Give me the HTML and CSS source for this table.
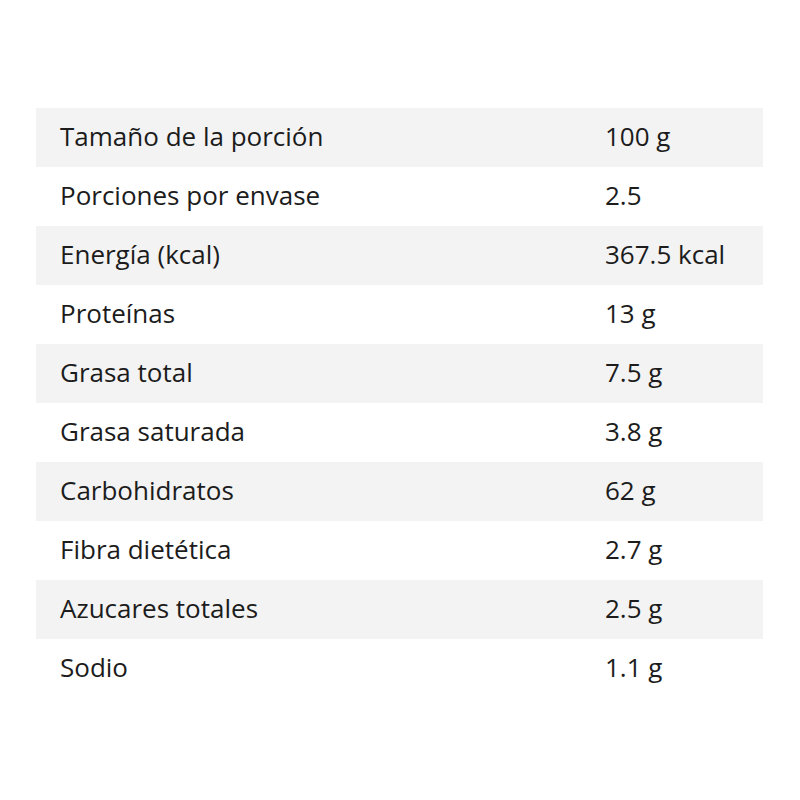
FILE: index.html
```html
<!DOCTYPE html>
<html lang="es">
<head>
<meta charset="utf-8">
<link rel="stylesheet" href="styles.css">
</head>
<body>
<div class="page">
  <div class="nut">
    <div class="row"><span class="k">Tamaño de la porción</span><span class="v">100 g</span></div>
    <div class="row"><span class="k">Porciones por envase</span><span class="v">2.5</span></div>
    <div class="row"><span class="k">Energía (kcal)</span><span class="v">367.5 kcal</span></div>
    <div class="row"><span class="k">Proteínas</span><span class="v">13 g</span></div>
    <div class="row"><span class="k">Grasa total</span><span class="v">7.5 g</span></div>
    <div class="row"><span class="k">Grasa saturada</span><span class="v">3.8 g</span></div>
    <div class="row"><span class="k">Carbohidratos</span><span class="v">62 g</span></div>
    <div class="row"><span class="k">Fibra dietética</span><span class="v">2.7 g</span></div>
    <div class="row"><span class="k">Azucares totales</span><span class="v">2.5 g</span></div>
    <div class="row"><span class="k">Sodio</span><span class="v">1.1 g</span></div>
  </div>
</div>
</body>
</html>
```

FILE: styles.css
```css
html, body {
  margin: 0;
  padding: 0;
  background: #ffffff;
}
.page {
  width: 800px;
  height: 800px;
  padding: 108px 37px 0 36px;
  box-sizing: border-box;
}
.nut {
  width: 727px;
  display: flex;
  flex-direction: column;
  font-family: "Open Sans", "Lato", sans-serif;
  font-size: 26px;
  line-height: 30px;
  color: #1c1c1c;
}
.row {
  height: 59px;
  display: grid;
  grid-template-columns: 569px 1fr;
  align-items: center;
  padding-bottom: 4px;
  box-sizing: border-box;
}
.row:nth-child(odd) {
  background: #f3f3f3;
}
.k {
  padding-left: 24px;
}
```
